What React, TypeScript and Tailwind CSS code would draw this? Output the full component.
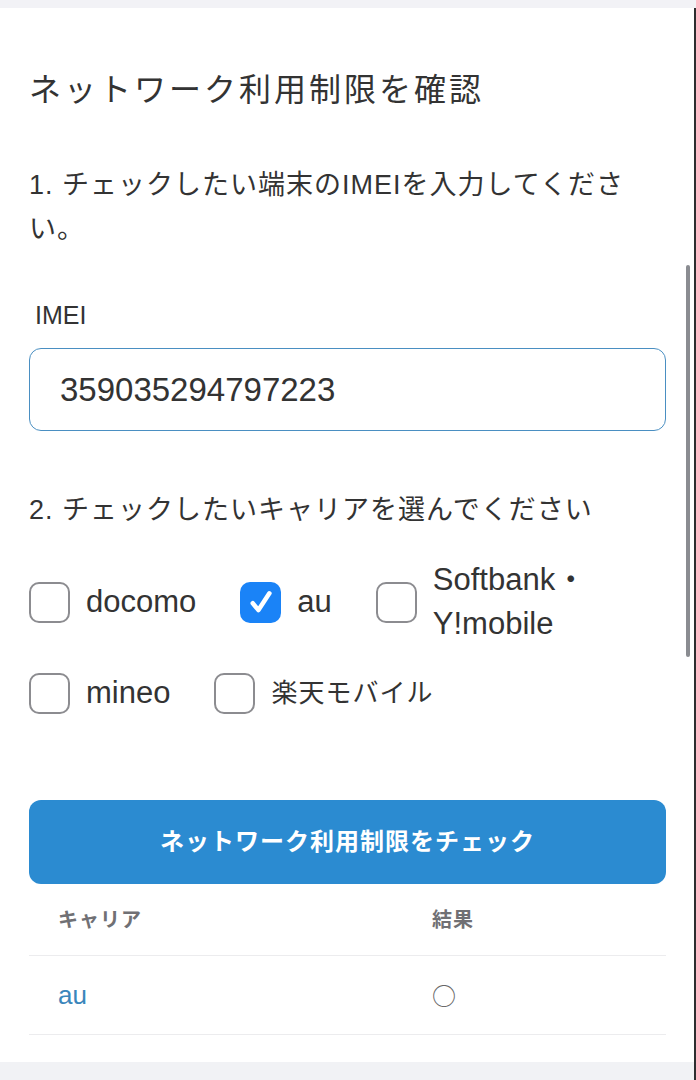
const carriersRow1 = [
  { id: "docomo", label: "docomo", checked: false },
  { id: "au", label: "au", checked: true },
];

const Checkbox = ({ checked }: { checked: boolean }) =>
  checked ? (
    <span className="flex h-[41px] w-[41px] shrink-0 items-center justify-center rounded-[10px] bg-[#1a83f7]">
      <svg viewBox="0 0 24 24" className="h-[36px] w-[36px]" fill="none" stroke="white" strokeWidth="3" strokeLinecap="round" strokeLinejoin="round">
        <path d="M6.5 12.8l3.8 4.6L17.6 6.2" />
      </svg>
    </span>
  ) : (
    <span className="h-[41px] w-[41px] shrink-0 rounded-[10px] border-2 border-[#8c8c90] bg-white" />
  );

const App = () => {
  return (
    <div className="relative h-[1080px] w-[696px] overflow-hidden bg-white font-['Liberation_Sans','Noto_Sans_CJK_JP',sans-serif] text-[#333]">
      {/* top strip */}
      <div className="h-[8px] bg-[#f2f2f6]" />

      <main className="pl-[29px] pr-[30px]">
        <h1 className="mt-[59px] text-[32px] leading-[46px] tracking-[3px]">ネットワーク利用制限を確認</h1>

        <p className="mt-[50px] text-[27px] leading-[44px] tracking-[1px]">
          1. チェックしたい端末のIMEIを入力してください。
        </p>

        <label className="mt-[49px] block pl-[6px] text-[25px] leading-[30px]">IMEI</label>
        <div className="mt-[18px] flex h-[83px] items-center rounded-[12px] border-[1.5px] border-[#4a8fc2] pl-[30px] text-[33px]">
          359035294797223
        </div>

        <p className="mt-[57px] text-[27px] leading-[44px] tracking-[1px]">2. チェックしたいキャリアを選んでください</p>

        {/* carriers */}
        <div className="mt-[26px] flex items-center gap-[44px]">
          {carriersRow1.map((c) => (
            <div key={c.id} className="flex items-center gap-[16px]">
              <Checkbox checked={c.checked} />
              <span className="text-[31px] leading-[44px]">{c.label}</span>
            </div>
          ))}
          <div className="flex items-center gap-[16px]">
            <Checkbox checked={false} />
            <span className="text-[31px] leading-[44px]">
              Softbank・
              <br />
              Y!mobile
            </span>
          </div>
        </div>
        <div className="mt-[25px] flex items-center gap-[44px]">
          <div className="flex items-center gap-[16px]">
            <Checkbox checked={false} />
            <span className="text-[31px] leading-[44px]">mineo</span>
          </div>
          <div className="flex items-center gap-[16px]">
            <Checkbox checked={false} />
            <span className="text-[26px] leading-[44px] tracking-[1px]">楽天モバイル</span>
          </div>
        </div>

        <button className="mt-[85px] flex h-[84px] w-full items-center justify-center rounded-[12px] bg-[#2b8bd1] text-[24px] font-bold tracking-[1px] text-white">
          ネットワーク利用制限をチェック
        </button>

        {/* results */}
        <div className="grid grid-cols-[374px_1fr] border-b border-[#ececee] text-[20px] font-bold tracking-[1px] text-[#707074]">
          <div className="flex h-[71px] items-center px-[29px]">キャリア</div>
          <div className="flex h-[71px] items-center px-[29px]">結果</div>
        </div>
        <div className="grid grid-cols-[374px_1fr] border-b border-[#ececee]">
          <div className="flex h-[78px] items-center px-[29px] text-[26px] text-[#3a86bb]">au</div>
          <div className="flex h-[78px] items-center px-[29px] font-['Noto_Sans_CJK_JP',sans-serif] text-[24px] text-[#666]">○</div>
        </div>
      </main>

      <div className="absolute bottom-0 left-0 h-[18px] w-full bg-[#f1f2f5]" />

      {/* scrollbar + edge */}
      <div className="absolute right-[6px] top-[265px] h-[392px] w-[4px] rounded-full bg-[#8a8c91]" />
      <div className="absolute bottom-0 right-0 top-[8px] w-[2px] bg-[#2e2e30]" />
    </div>
  );
};

export default App;
